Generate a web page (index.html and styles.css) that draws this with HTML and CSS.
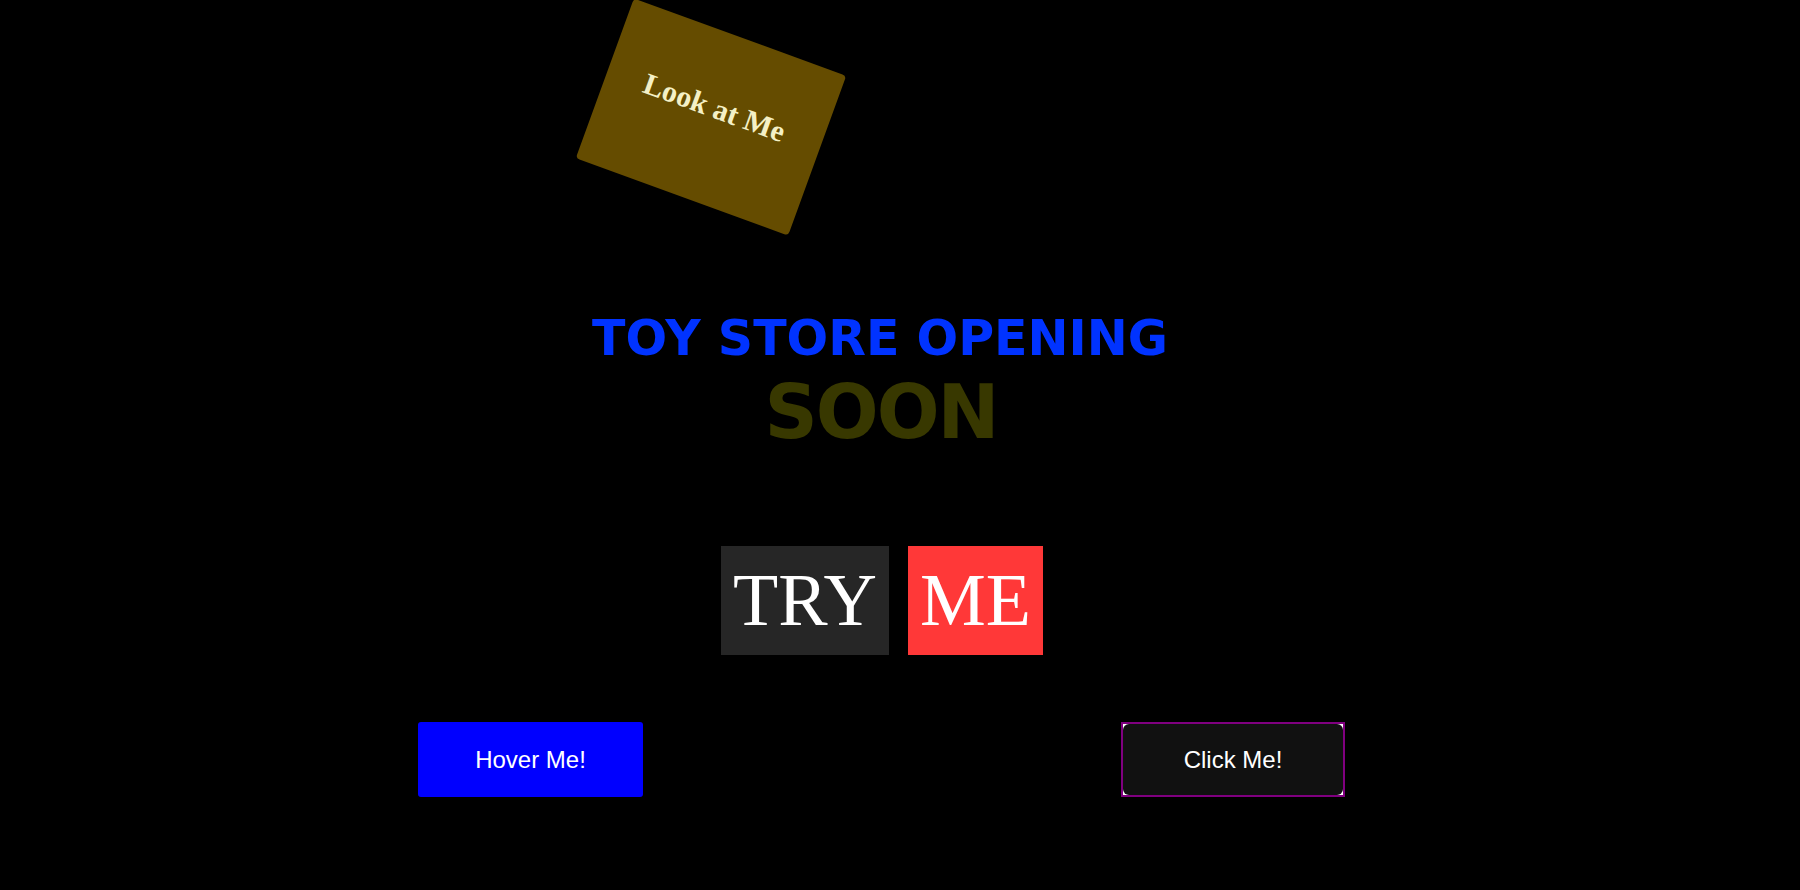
FILE: index.html
```html
<!DOCTYPE html>
<html>
<head>
<meta charset="utf-8">
<link rel="stylesheet" href="styles.css">
</head>
<body>
<div class="page">
  <div class="sign-row">
    <div class="sign">Look at Me</div>
  </div>
  <div class="headline">
    <h1 class="title">TOY STORE OPENING</h1>
    <div class="soon">SOON</div>
  </div>
  <div class="try-row">
    <span class="try">TRY</span>
    <span class="me">ME</span>
  </div>
  <div class="btn-row">
    <button class="hover-btn">Hover Me!</button>
    <div class="click-wrap"><button class="click-btn">Click Me!</button></div>
  </div>
</div>
</body>
</html>
```
FILE: styles.css
```css
html, body {
  margin: 0;
  padding: 0;
  background: #000;
}
body {
  width: 1800px;
  height: 890px;
  overflow: hidden;
}
.page {
  display: flex;
  flex-direction: column;
}
.sign-row {
  display: flex;
  padding-left: 598px;
  padding-top: 32px;
  height: 168px;
}
.sign {
  width: 226px;
  height: 170px;
  box-sizing: border-box;
  padding-top: 58px;
  background: #654c00;
  border-radius: 4px;
  transform: rotate(20deg);
  font-family: "Liberation Serif", serif;
  font-weight: bold;
  font-size: 30px;
  line-height: 34px;
  text-align: center;
  color: #f4f0c6;
}
.headline {
  padding-right: 40px;
  text-align: center;
  font-family: "DejaVu Sans", sans-serif;
  font-weight: bold;
  margin-top: 110px;
}
.title {
  margin: 0;
  font-size: 49px;
  line-height: 57px;
  color: #0033ff;
  font-weight: bold;
}
.soon {
  margin-top: 2px;
  padding-left: 2px;
  font-size: 74px;
  line-height: 86px;
  letter-spacing: -2px;
  color: #383800;
}
.try-row {
  display: flex;
  justify-content: center;
  gap: 19px;
  padding-right: 36px;
  margin-top: 91px;
  font-family: "Liberation Serif", serif;
  font-size: 74px;
  color: #fff;
}
.try, .me {
  display: block;
  height: 109px;
  line-height: 109px;
  box-sizing: border-box;
  text-align: center;
}
.try {
  width: 168px;
  background: #262626;
}
.me {
  width: 135px;
  background: #ff3838;
}
.btn-row {
  display: flex;
  justify-content: space-between;
  width: 927px;
  margin-left: 418px;
  margin-top: 67px;
}
.hover-btn {
  width: 225px;
  height: 75px;
  border: none;
  border-radius: 3px;
  background: #0000ff;
  color: #fff;
  font-family: "Liberation Sans", Arial, sans-serif;
  font-size: 24px;
  padding: 0;
}
.click-wrap {
  width: 224px;
  height: 75px;
  box-sizing: border-box;
  border: 2px solid #800080;
  background: #fff;
  display: flex;
}
.click-btn {
  flex: 1;
  border: none;
  border-radius: 6px;
  background: #111;
  color: #fff;
  font-family: "Liberation Sans", Arial, sans-serif;
  font-size: 24px;
  padding: 0;
}
```
